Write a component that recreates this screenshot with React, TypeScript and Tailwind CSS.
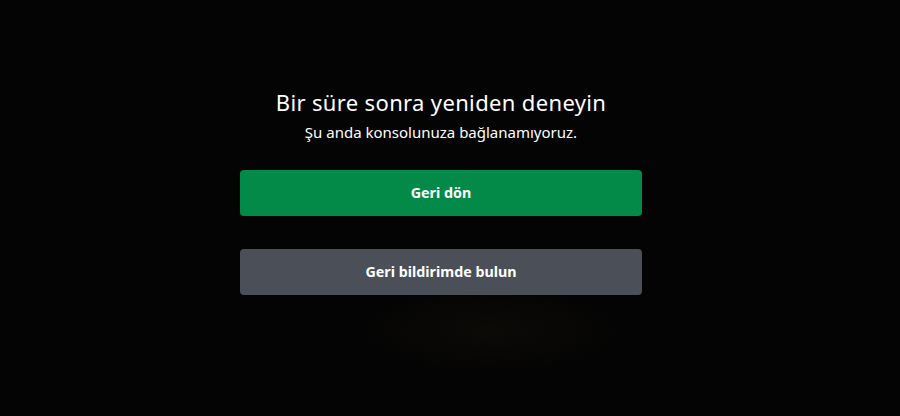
export default function App() {
  return (
    <div className="relative h-[416px] w-[900px] overflow-hidden bg-[#040404] font-['Noto_Sans',sans-serif]">
      {/* faint glow behind the buttons */}
      <div className="pointer-events-none absolute left-[350px] top-[285px] h-[90px] w-[280px] bg-[radial-gradient(ellipse_at_center,#0c0a07_0%,transparent_70%)]" />

      <div className="relative ml-[240px] flex w-[402px] flex-col items-center pt-[88px]">
        <h1 className="text-[22px] leading-[28px] tracking-[0.35px] text-white">
          Bir süre sonra yeniden deneyin
        </h1>
        <p className="mt-[6px] text-[15px] leading-[20px] text-white">
          Şu anda konsolunuza bağlanamıyoruz.
        </p>

        <button className="mt-[28px] flex h-[46px] w-full items-center justify-center rounded-[4px] bg-[#038a49] text-[14.3px] font-bold text-white">
          Geri dön
        </button>
        <button className="mt-[33px] flex h-[46px] w-full items-center justify-center rounded-[4px] bg-[#4b5058] text-[14.3px] font-bold text-white">
          Geri bildirimde bulun
        </button>
      </div>
    </div>
  )
}
